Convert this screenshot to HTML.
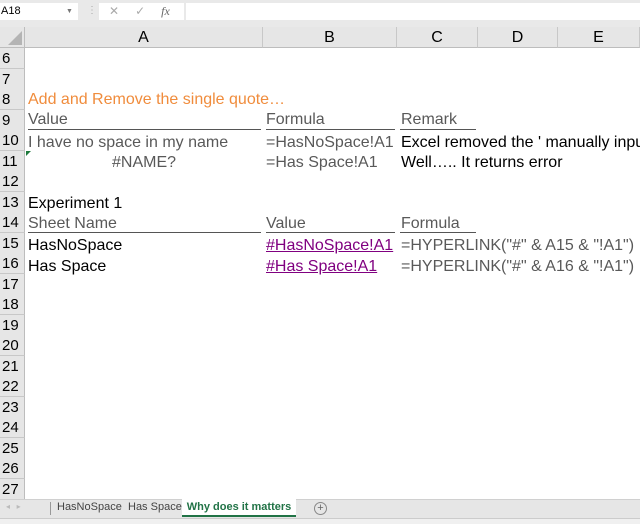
<!DOCTYPE html>
<html><head><meta charset="utf-8"><style>
*{margin:0;padding:0;box-sizing:border-box}
body{width:640px;height:524px;overflow:hidden;background:#fff;font-family:"Liberation Sans",Arial,sans-serif;position:relative}
.a{position:absolute;white-space:nowrap}
.t{font-size:16px;line-height:20px}
.g{color:#595959}.k{color:#000}
.rh{position:absolute;left:0;width:25px;height:21px;background:#e6e6e6;border-bottom:1px solid #c8c8c8;border-right:1px solid #bdbdbd;font-size:15px;line-height:21px;padding-left:2px;color:#000}
.ch{position:absolute;top:27px;height:21px;background:#e6e6e6;border-right:1px solid #c8c8c8;font-size:16px;text-align:center;line-height:22px;border-bottom:1px solid #bdbdbd}
.ul{position:absolute;height:1px;background:#555}
</style></head><body>
<div class="a" style="left:0;top:0;width:640px;height:27px;background:#e9e9e9"></div>
<div class="a" style="left:0;top:3px;width:78px;height:17px;background:#fff;font-size:11px;line-height:17px;padding-left:1px">A18<span style="position:absolute;left:66px;font-size:7px;color:#777">▼</span></div>
<div class="a" style="left:87px;top:5px;color:#aaa;font-size:10px">⋮</div>
<div class="a" style="left:99px;top:3px;width:85px;height:17px;background:#fff;color:#aaa;font-size:12px;line-height:17px"><span style="margin-left:10px">✕</span><span style="margin-left:16px">✓</span><span style="margin-left:16px;font-style:italic;font-family:'Liberation Serif',serif;color:#666">fx</span></div>
<div class="a" style="left:186px;top:3px;width:454px;height:17px;background:#fff"></div>
<div class="a" style="left:0;top:27px;width:25px;height:21px;background:#e6e6e6;border-right:1px solid #bdbdbd;border-bottom:1px solid #bdbdbd"><div style="position:absolute;right:2px;bottom:2px;width:0;height:0;border-left:14px solid transparent;border-bottom:14px solid #b4b4b4"></div></div>
<div class="ch" style="left:25px;width:238px">A</div>
<div class="ch" style="left:263px;width:134px">B</div>
<div class="ch" style="left:397px;width:81px">C</div>
<div class="ch" style="left:478px;width:80px">D</div>
<div class="ch" style="left:558px;width:82px">E</div>
<div class="rh" style="top:48px">6</div>
<div class="rh" style="top:68.5px">7</div>
<div class="rh" style="top:89px">8</div>
<div class="rh" style="top:109.5px">9</div>
<div class="rh" style="top:130px">10</div>
<div class="rh" style="top:150.5px">11</div>
<div class="rh" style="top:171px">12</div>
<div class="rh" style="top:191.5px">13</div>
<div class="rh" style="top:212px">14</div>
<div class="rh" style="top:232.5px">15</div>
<div class="rh" style="top:253px">16</div>
<div class="rh" style="top:273.5px">17</div>
<div class="rh" style="top:294px">18</div>
<div class="rh" style="top:314.5px">19</div>
<div class="rh" style="top:335px">20</div>
<div class="rh" style="top:355.5px">21</div>
<div class="rh" style="top:376px">22</div>
<div class="rh" style="top:396.5px">23</div>
<div class="rh" style="top:417px">24</div>
<div class="rh" style="top:437.5px">25</div>
<div class="rh" style="top:458px">26</div>
<div class="rh" style="top:478.5px">27</div>
<div class="a t" style="left:28px;top:90px;color:#f08c3c">Add and Remove the single quote…</div>
<div class="a t g" style="left:28px;top:110px">Value</div>
<div class="a t g" style="left:266px;top:110px">Formula</div>
<div class="a t g" style="left:401px;top:110px">Remark</div>
<div class="ul" style="left:28px;top:129px;width:233px"></div>
<div class="ul" style="left:266px;top:129px;width:129px"></div>
<div class="ul" style="left:400px;top:129px;width:76px"></div>
<div class="a t g" style="left:28px;top:133px">I have no space in my name</div>
<div class="a t g" style="left:266px;top:133px">=HasNoSpace!A1</div>
<div class="a t k" style="left:401px;top:133px">Excel removed the ' manually input</div>
<div class="a" style="left:26px;top:151px;width:0;height:0;border-top:5px solid #1e7a3c;border-right:5px solid transparent"></div>
<div class="a t g" style="left:112px;top:153px">#NAME?</div>
<div class="a t g" style="left:266px;top:153px">=Has Space!A1</div>
<div class="a t k" style="left:401px;top:153px">Well….. It returns error</div>
<div class="a t k" style="left:28px;top:194px">Experiment 1</div>
<div class="a t g" style="left:28px;top:214px">Sheet Name</div>
<div class="a t g" style="left:266px;top:214px">Value</div>
<div class="a t g" style="left:401px;top:214px">Formula</div>
<div class="ul" style="left:28px;top:232px;width:233px"></div>
<div class="ul" style="left:266px;top:232px;width:129px"></div>
<div class="ul" style="left:400px;top:232px;width:76px"></div>
<div class="a t k" style="left:28px;top:236px">HasNoSpace</div>
<div class="a t" style="left:266px;top:236px;color:#800080;text-decoration:underline">#HasNoSpace!A1</div>
<div class="a t g" style="left:401px;top:236px">=HYPERLINK("#" &amp; A15 &amp; "!A1")</div>
<div class="a t k" style="left:28px;top:257px">Has Space</div>
<div class="a t" style="left:266px;top:257px;color:#800080;text-decoration:underline">#Has Space!A1</div>
<div class="a t g" style="left:401px;top:257px">=HYPERLINK("#" &amp; A16 &amp; "!A1")</div>
<div class="a" style="left:0;top:499px;width:640px;height:19px;background:#e6e6e6;border-top:1px solid #d0d0d0"></div>
<div class="a" style="left:6px;top:502px;font-size:8px;color:#bbb">◂ &nbsp; ▸</div>
<div class="a" style="left:50px;top:502px;width:1px;height:13px;background:#999"></div>
<div class="a" style="left:57px;top:501px;font-size:11px;color:#444">HasNoSpace</div>
<div class="a" style="left:128px;top:501px;font-size:11px;color:#444">Has Space</div>
<div class="a" style="left:182px;top:499px;width:114px;height:18px;background:#fff;border-bottom:2px solid #217346;font-size:11px;font-weight:bold;color:#217346;text-align:center;line-height:17px">Why does it matters</div>
<div class="a" style="left:314px;top:502px;width:13px;height:13px;border:1px solid #888;border-radius:50%;font-size:11px;line-height:10px;text-align:center;color:#666">+</div>
<div class="a" style="left:0;top:518px;width:640px;height:6px;background:#f0f0f0;border-top:1px solid #ccc"></div>
</body></html>
